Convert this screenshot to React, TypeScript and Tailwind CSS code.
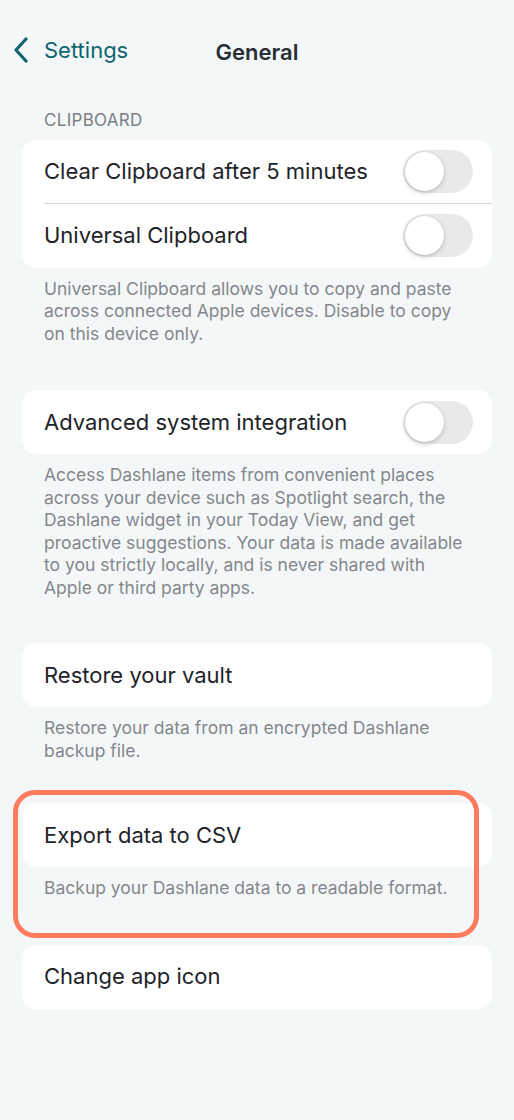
import React from "react";

function Toggle() {
  return (
    <div className="relative h-[43px] w-[70px] shrink-0 rounded-full bg-[#e9e9ea]">
      <div className="absolute left-[2px] top-[2px] h-[39px] w-[39px] rounded-full bg-white shadow-[0_2px_5px_rgba(0,0,0,0.18),0_0_1px_rgba(0,0,0,0.2)]" />
    </div>
  );
}

function Row({ label, toggle, divider }: { label: string; toggle?: boolean; divider?: boolean }) {
  return (
    <div className="relative flex h-[64px] items-center justify-between pl-[22px] pr-[19px]">
      <span className="text-[22px] text-[#1e2329]">{label}</span>
      {toggle && <Toggle />}
      {divider && <div className="absolute bottom-0 left-[22px] right-0 h-px bg-[#d6d8da]" />}
    </div>
  );
}

function Footer({ children }: { children: React.ReactNode }) {
  return (
    <p className="px-[44px] pt-[10px] text-[17.5px] leading-[22.5px] text-[#84878c]">{children}</p>
  );
}

export default function App() {
  return (
    <div
      className="min-h-[1120px] w-[514px] bg-[#f4f7f8]"
      style={{ fontFamily: "Inter, 'Noto Sans', sans-serif" }}
    >
      <div className="relative flex h-[100px] items-center pb-[2px] pt-[2px]">
        <div className="flex items-center pl-[13px] text-[#0f6470]">
          <svg width="16" height="26" viewBox="0 0 16 26" fill="none">
            <path d="M13 2 L3 13 L13 24" stroke="#0f6470" strokeWidth="3.2" strokeLinecap="round" strokeLinejoin="round" />
          </svg>
          <span className="ml-[15px] text-[22px]">Settings</span>
        </div>
        <div className="absolute left-0 right-0 top-[36px] text-center text-[22px] font-semibold text-[#2a2f35]">
          General
        </div>
      </div>

      <div className="px-[44px] pt-[8px] text-[17px] tracking-[0.3px] text-[#7b7f86]">CLIPBOARD</div>
      <div className="mx-[22px] mt-[6px] overflow-hidden rounded-[14px] bg-white">
        <Row label="Clear Clipboard after 5 minutes" toggle divider />
        <Row label="Universal Clipboard" toggle />
      </div>
      <Footer>
        Universal Clipboard allows you to copy and paste across connected Apple devices. Disable to copy on this device only.
      </Footer>

      <div className="mx-[22px] mt-[45px] overflow-hidden rounded-[14px] bg-white">
        <Row label="Advanced system integration" toggle />
      </div>
      <Footer>
        Access Dashlane items from convenient places across your device such as Spotlight search, the Dashlane widget in your Today View, and get proactive suggestions. Your data is made available to you strictly locally, and is never shared with Apple or third party apps.
      </Footer>

      <div className="mx-[22px] mt-[44px] overflow-hidden rounded-[14px] bg-white">
        <Row label="Restore your vault" />
      </div>
      <Footer>Restore your data from an encrypted Dashlane backup file.</Footer>

      <div className="relative mt-[41px]">
        <div className="mx-[22px] overflow-hidden rounded-[14px] bg-white">
          <Row label="Export data to CSV" />
        </div>
        <Footer>Backup your Dashlane data to a readable format.</Footer>
        <div className="pointer-events-none absolute left-[13px] top-[-13px] h-[148px] w-[466px] rounded-[22px] border-[5px] border-[#ff7b5f]" />
      </div>

      <div className="mx-[22px] mt-[45px] overflow-hidden rounded-[14px] bg-white">
        <Row label="Change app icon" />
      </div>
    </div>
  );
}
